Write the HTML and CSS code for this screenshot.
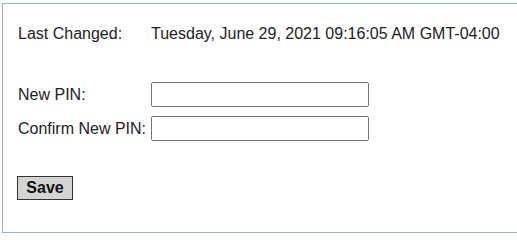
FILE: index.html
```html
<!DOCTYPE html>
<html>
<head>
<meta charset="utf-8">
<link rel="stylesheet" href="styles.css">
</head>
<body>
<div class="panel">
  <div class="info-row">
    <span class="label">Last Changed:</span>
    <span class="value">Tuesday, June 29, 2021 09:16:05 AM GMT-04:00</span>
  </div>
  <form class="pin-form">
    <label class="label" for="pin1">New PIN:</label>
    <input class="field" id="pin1" type="password">
    <label class="label" for="pin2">Confirm New PIN:</label>
    <input class="field" id="pin2" type="password">
  </form>
  <button class="save" type="button">Save</button>
</div>
</body>
</html>
```

FILE: styles.css
```css
html, body {
  margin: 0;
  padding: 0;
  background: #ffffff;
}

body {
  font-family: "Liberation Sans", Arial, sans-serif;
  font-size: 16px;
  color: #222222;
}

.panel {
  box-sizing: border-box;
  margin: 3px 0 0 2px;
  height: 230px;
  border-top: 1px solid #9fb4bc;
  border-left: 1px solid #9fb4bc;
  border-bottom: 1px solid #9fb4bc;
  padding: 21px 0 0 15px;
}

.info-row,
.pin-form {
  display: grid;
  grid-template-columns: 128px auto;
  column-gap: 5px;
  align-items: center;
  justify-content: start;
  line-height: 18px;
}

.label,
.value {
  white-space: nowrap;
}

.pin-form {
  margin: 39px 0 0 0;
  row-gap: 9px;
}

.field {
  box-sizing: border-box;
  width: 218px;
  height: 25px;
  margin: 0;
  border: 1px solid #767676;
  border-radius: 2px;
  background: #ffffff;
  font: inherit;
  padding: 1px 2px;
}

.save {
  display: block;
  box-sizing: border-box;
  margin: 35px 0 0 -1px;
  height: 24px;
  width: 56px;
  padding: 0;
  border: 1px solid #333333;
  border-radius: 0;
  background: #d4d4d4;
  font-family: "Liberation Sans", Arial, sans-serif;
  font-size: 16px;
  font-weight: bold;
  color: #111111;
  line-height: 20px;
}
```
